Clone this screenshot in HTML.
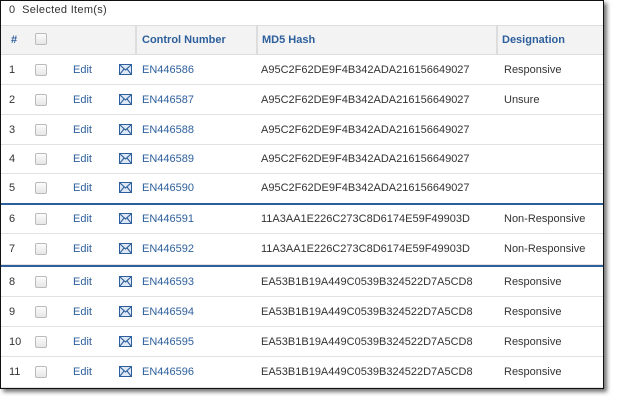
<!DOCTYPE html>
<html><head><style>
body{margin:0;width:617px;height:402px;background:#fff;position:relative;overflow:hidden;font-family:"Liberation Sans",sans-serif;font-size:11px;color:#333}
#frame{position:absolute;left:0;top:0;width:602px;height:387px;border:1px solid #111;background:#fff;box-shadow:3px 3px 4px rgba(0,0,0,.55);overflow:hidden}
.sel{position:absolute;left:8px;top:3px;font-size:11px;color:#333;letter-spacing:.3px}
.hdr{position:absolute;left:0;top:24px;width:602px;height:28px;background:#f3f3f3;border-top:1px solid #ddd;border-bottom:1px solid #ddd}
.hdr span{position:absolute;top:8px;font-weight:bold;color:#2d5f9c}
.div{position:absolute;top:0;width:2px;height:28px;background:#ddd}
.row{position:absolute;left:0;width:602px;border-bottom:1px solid #e2e2e2}
.row span{position:absolute;top:50%;transform:translateY(-50%)}
.cb{position:absolute;left:34px;top:50%;margin-top:-6px;width:10px;height:10px;border:1px solid #bbb;border-radius:2px;background:linear-gradient(#fcfcfc,#e6e6e6)}
.blue{color:#2d5f9c}
.h{letter-spacing:0}
.env{position:absolute;left:118px;top:50%;margin-top:-6px;width:11px;height:9px;border:1.5px solid #2d5f9c;background:#dfe8f5}
.bl{position:absolute;left:0;width:602px;height:2px;background:#2d5f9c}
</style></head><body>
<div id="frame">
<div class="sel">0&nbsp; Selected Item(s)</div>
<div class="hdr">
<span style="left:10px">#</span>
<div class="cb" style="top:13px"></div>
<div class="div" style="left:134px"></div>
<span style="left:141px">Control Number</span>
<div class="div" style="left:255px"></div>
<span style="left:261px">MD5 Hash</span>
<div class="div" style="left:495px"></div>
<span style="left:501px">Designation</span>
</div>
<div id="rows"></div>
</div>
<script>
var rows=[[1,54,29,"EN446586","A95C2F62DE9F4B342ADA216156649027","Responsive"],
[2,84,29,"EN446587","A95C2F62DE9F4B342ADA216156649027","Unsure"],
[3,114,29,"EN446588","A95C2F62DE9F4B342ADA216156649027",""],
[4,143,29,"EN446589","A95C2F62DE9F4B342ADA216156649027",""],
[5,172,30,"EN446590","A95C2F62DE9F4B342ADA216156649027",""],
[6,204,28,"EN446591","11A3AA1E226C273C8D6174E59F49903D","Non-Responsive"],
[7,233,30,"EN446592","11A3AA1E226C273C8D6174E59F49903D","Non-Responsive"],
[8,266,29,"EN446593","EA53B1B19A449C0539B324522D7A5CD8","Responsive"],
[9,296,29,"EN446594","EA53B1B19A449C0539B324522D7A5CD8","Responsive"],
[10,326,29,"EN446595","EA53B1B19A449C0539B324522D7A5CD8","Responsive"],
[11,356,30,"EN446596","EA53B1B19A449C0539B324522D7A5CD8","Responsive"]];
var h="";
rows.forEach(function(r){
h+='<div class="row" style="top:'+r[1]+'px;height:'+r[2]+'px"><span style="left:8px">'+r[0]+'</span><div class="cb"></div><span class="blue" style="left:72px">Edit</span><div class="env"><svg width="11" height="9" style="position:absolute;left:0;top:0"><path d="M0 0L5.5 5L11 0M0 9L4 4M11 9L7 4" stroke="#2d5f9c" stroke-width="1.1" fill="none"/></svg></div><span class="blue h" style="left:141px">'+r[3]+'</span><span class="h" style="left:260px">'+r[4]+'</span><span style="left:503px">'+r[5]+'</span></div>';
});
h+='<div class="bl" style="top:202px"></div><div class="bl" style="top:264px"></div>';
document.getElementById("rows").innerHTML=h;
</script>
</body></html>
